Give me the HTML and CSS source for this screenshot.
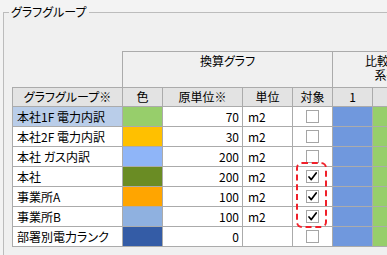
FILE: index.html
```html
<!DOCTYPE html>
<html lang="ja">
<head>
<meta charset="utf-8">
<title>グラフグループ</title>
<link rel="stylesheet" href="styles.css">
</head>
<body>
<fieldset class="group">
  <legend class="group-title">グラフグループ</legend>
  <table class="grid">
    <colgroup>
      <col class="c-name"><col class="c-color"><col class="c-unit-val"><col class="c-unit"><col class="c-target"><col class="c-s"><col class="c-s"><col class="c-s">
    </colgroup>
    <thead>
      <tr class="row-group">
        <th class="corner"></th>
        <th class="group-head" colspan="4">換算グラフ</th>
        <th class="group-head" colspan="3">比較グラフ<br>系列数</th>
      </tr>
      <tr class="row-head">
        <th>グラフグループ※</th>
        <th>色</th>
        <th>原単位※</th>
        <th>単位</th>
        <th>対象</th>
        <th>1</th>
        <th>2</th>
        <th>3</th>
      </tr>
    </thead>
    <tbody>
      <tr>
        <td class="name selected">本社1F 電力内訳</td>
        <td class="sw sw-1"></td>
        <td class="num">70</td>
        <td class="unit">m2</td>
        <td class="chk"><span class="cb"></span></td>
        <td class="s1"></td><td class="s2"></td><td class="s3"></td>
      </tr>
      <tr>
        <td class="name">本社2F 電力内訳</td>
        <td class="sw sw-2"></td>
        <td class="num">30</td>
        <td class="unit">m2</td>
        <td class="chk"><span class="cb"></span></td>
        <td class="s1"></td><td class="s2"></td><td class="s3"></td>
      </tr>
      <tr>
        <td class="name">本社 ガス内訳</td>
        <td class="sw sw-3"></td>
        <td class="num">200</td>
        <td class="unit">m2</td>
        <td class="chk"><span class="cb"></span></td>
        <td class="s1"></td><td class="s2"></td><td class="s3"></td>
      </tr>
      <tr>
        <td class="name">本社</td>
        <td class="sw sw-4"></td>
        <td class="num">200</td>
        <td class="unit">m2</td>
        <td class="chk"><span class="cb"><svg viewBox="0 0 11 11" width="11" height="11"><path d="M2 6 L4.3 8.6 L9.2 2" fill="none" stroke="#000" stroke-width="1.7" stroke-linecap="round" stroke-linejoin="round"/></svg></span></td>
        <td class="s1"></td><td class="s2"></td><td class="s3"></td>
      </tr>
      <tr>
        <td class="name">事業所A</td>
        <td class="sw sw-5"></td>
        <td class="num">100</td>
        <td class="unit">m2</td>
        <td class="chk"><span class="cb"><svg viewBox="0 0 11 11" width="11" height="11"><path d="M2 6 L4.3 8.6 L9.2 2" fill="none" stroke="#000" stroke-width="1.7" stroke-linecap="round" stroke-linejoin="round"/></svg></span></td>
        <td class="s1"></td><td class="s2"></td><td class="s3"></td>
      </tr>
      <tr>
        <td class="name">事業所B</td>
        <td class="sw sw-6"></td>
        <td class="num">100</td>
        <td class="unit">m2</td>
        <td class="chk"><span class="cb"><svg viewBox="0 0 11 11" width="11" height="11"><path d="M2 6 L4.3 8.6 L9.2 2" fill="none" stroke="#000" stroke-width="1.7" stroke-linecap="round" stroke-linejoin="round"/></svg></span></td>
        <td class="s1"></td><td class="s2"></td><td class="s3"></td>
      </tr>
      <tr>
        <td class="name">部署別電力ランク</td>
        <td class="sw sw-7"></td>
        <td class="num">0</td>
        <td class="unit"></td>
        <td class="chk"><span class="cb"></span></td>
        <td class="s1"></td><td class="s2"></td><td class="s3"></td>
      </tr>
    </tbody>
  </table>
</fieldset>
<div class="highlight"></div>
</body>
</html>
```
FILE: styles.css
```css
html, body {
  margin: 0;
  padding: 0;
}
body {
  position: relative;
  width: 387px;
  height: 255px;
  overflow: hidden;
  background: #f3f3f3;
  font-family: "Noto Sans CJK JP", "Noto Sans", sans-serif;
  font-size: 12px;
  font-feature-settings: "palt";
  color: #000;
}
.group {
  margin: 5px 0 0 3px;
  padding: 0 0 0 8px;
  border: 1px solid #bcbcbc;
  border-right: 0;
  border-bottom: 0;
  width: 500px;
  height: 300px;
  min-width: 0;
  background: #f0f0f0;
  box-sizing: border-box;
}
.group-title {
  margin-left: -3px;
  padding: 0 2px;
  line-height: 14px;
}
.grid {
  margin-top: 32px;
  border-collapse: collapse;
  table-layout: fixed;
  width: 440px;
}
.c-name { width: 110px; }
.c-color { width: 40px; }
.c-unit-val { width: 80px; }
.c-unit { width: 50px; }
.c-target { width: 40px; }
.c-s { width: 40px; }

.grid th, .grid td {
  border: 1px solid #ababab;
  padding: 0;
  line-height: 14px;
  white-space: nowrap;
  overflow: hidden;
  font-weight: normal;
}
.row-group { height: 36px; }
.row-group th {
  vertical-align: top;
  padding-top: 2px;
  text-align: center;
  background: #f0f0f0;
}
.grid .corner {
  border-top: none;
  border-left: none;
}
.row-head { height: 19px; }
.row-head th {
  background: #e3e3e3;
  text-align: center;
}
.grid tbody tr { height: 20px; }
.grid tbody td { background: #fff; }
.grid td.name { padding-left: 4px; }
.grid td.selected { background: #b9cde9; }
.grid td.num { text-align: right; padding-right: 3px; }
.grid td.unit { padding-left: 5px; }
.grid td.chk { text-align: center; }

.sw-1 { background: #97ce6b !important; }
.sw-2 { background: #ffc000 !important; }
.sw-3 { background: #8fb5f8 !important; }
.sw-4 { background: #6a8c24 !important; }
.sw-5 { background: #ffa500 !important; }
.sw-6 { background: #8fb1e0 !important; }
.sw-7 { background: #345ca6 !important; }
.grid td.s1 { background: #7098dd; }
.grid td.s2 { background: #97ce6b; }
.grid td.s3 { background: #ffc000; }

.cb {
  display: inline-block;
  width: 11px;
  height: 11px;
  border: 1px solid #a5a5a5;
  background: #fff;
  vertical-align: middle;
  position: relative;
  top: -1px;
}
.cb svg { display: block; }

.highlight {
  position: absolute;
  left: 296px;
  top: 162px;
  width: 27px;
  height: 62px;
  border: 2px dashed #f0202a;
  border-radius: 6px;
}
```
